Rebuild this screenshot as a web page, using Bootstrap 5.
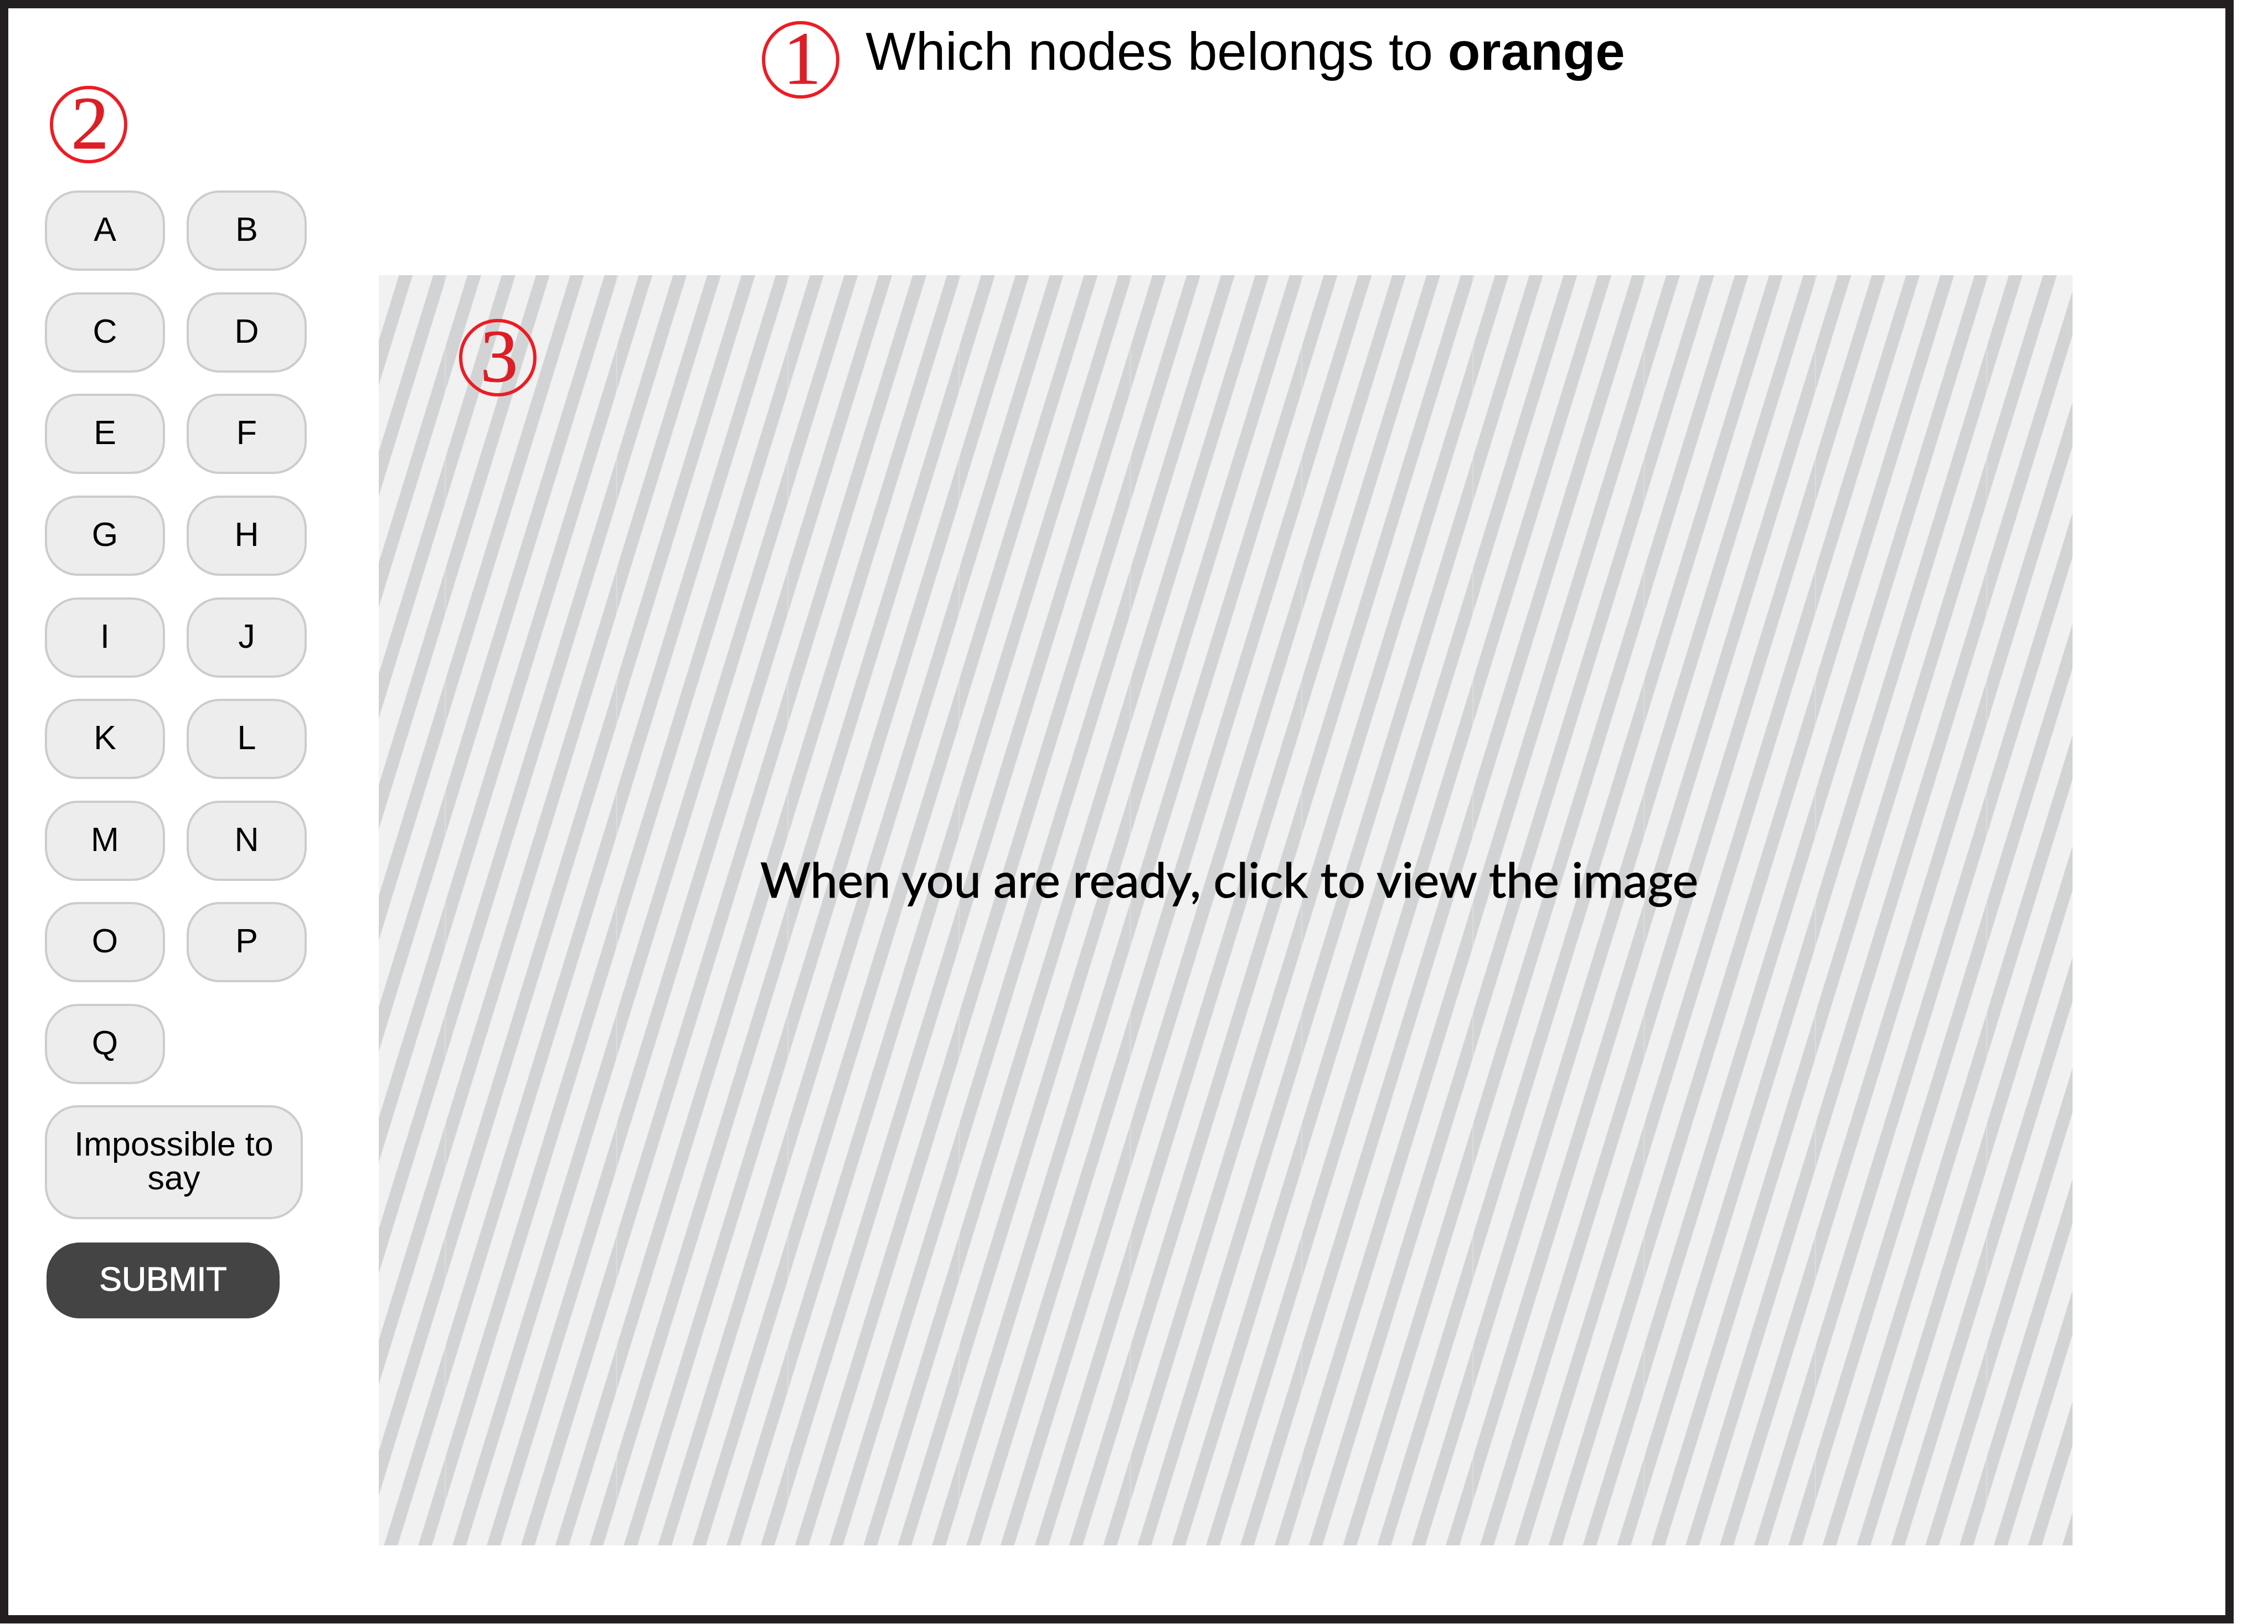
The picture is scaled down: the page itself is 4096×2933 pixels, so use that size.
<!DOCTYPE html>
<html lang="en">
<head>
<meta charset="utf-8">
<meta name="viewport" content="width=device-width, initial-scale=1">
<title>Which nodes belongs to orange</title>
<link href="https://cdn.jsdelivr.net/npm/bootstrap@5.3.0/dist/css/bootstrap.min.css" rel="stylesheet">
<style>
  body { background: #fff; color: #000; font-family: "Liberation Sans", Arial, sans-serif; }
  .study-frame { border: 15px solid #231f20; margin-right: 62px; padding: 0 276px 126px 66px; }

  /* Answer column */
  .answer-side { width: 603px; padding-top: 140px; }
  .answer-grid { display: grid; grid-template-columns: 217px 217px; column-gap: 39px; align-content: space-between; min-height: 1614px; margin-top: 49px; }
  .answer-btn { --bs-btn-color: #000; --bs-btn-bg: #ededed; --bs-btn-border-color: #ccc; --bs-btn-border-width: 4px;
    --bs-btn-border-radius: 60px; --bs-btn-font-size: 61px; --bs-btn-line-height: 61px; --bs-btn-font-family: inherit;
    --bs-btn-hover-bg: #ddd; --bs-btn-hover-color: #000; --bs-btn-hover-border-color: #bbb;
    padding: 36px 24px 40px; }
  .answer-wide { width: 466px; margin-top: 38px; }
  .submit-btn { --bs-btn-color: #fff; --bs-btn-bg: #444; --bs-btn-border-width: 0;
    --bs-btn-hover-bg: #333; --bs-btn-hover-color: #fff; width: 421px; margin: 42px 0 0 3px; -webkit-text-stroke: 1px; }

  /* Question and picture */
  .question-row { gap: 47px; padding: 23px 116px 0 0; margin-bottom: 319px; }
  .question-text { font-size: 96px; line-height: 110px; }
  .view-panel { aspect-ratio: 4 / 3; background: #f1f1f1; }
  .view-label { font-family: Lato, sans-serif; font-size: 88px; line-height: 108px; padding: 0 0 114px 13px; -webkit-text-stroke: 1px; }

  /* Red numbered callouts */
  .step-mark { width: 140px; height: 140px; border: 6px solid #ed1c24; border-radius: 50%; color: #dc1e26;
    font-family: "Liberation Serif", serif; font-size: 136px; line-height: 128px; padding: 0 0 6px 5px; -webkit-text-stroke: 1px; }
  .step-side { margin-left: 9px; }
  .step-panel { left: 145px; top: 79px; }
</style>
</head>
<body>
<main class="study-frame d-flex align-items-start">
  <aside class="answer-side flex-shrink-0">
    <span class="step-mark step-side d-flex align-items-center justify-content-center">2</span>
    <div class="answer-grid" role="group" aria-label="Nodes">
      <button type="button" class="btn answer-btn">A</button>
      <button type="button" class="btn answer-btn">B</button>
      <button type="button" class="btn answer-btn">C</button>
      <button type="button" class="btn answer-btn">D</button>
      <button type="button" class="btn answer-btn">E</button>
      <button type="button" class="btn answer-btn">F</button>
      <button type="button" class="btn answer-btn">G</button>
      <button type="button" class="btn answer-btn">H</button>
      <button type="button" class="btn answer-btn">I</button>
      <button type="button" class="btn answer-btn">J</button>
      <button type="button" class="btn answer-btn">K</button>
      <button type="button" class="btn answer-btn">L</button>
      <button type="button" class="btn answer-btn">M</button>
      <button type="button" class="btn answer-btn">N</button>
      <button type="button" class="btn answer-btn">O</button>
      <button type="button" class="btn answer-btn">P</button>
      <button type="button" class="btn answer-btn">Q</button>
    </div>
    <button type="button" class="btn answer-btn answer-wide d-block">Impossible to say</button>
    <button type="submit" class="btn answer-btn submit-btn d-block">SUBMIT</button>
  </aside>

  <section class="flex-grow-1">
    <header class="question-row d-flex justify-content-center align-items-start">
      <span class="step-mark d-flex align-items-center justify-content-center flex-shrink-0">1</span>
      <h1 class="question-text fw-normal m-0">Which nodes belongs to <strong class="fw-bold">orange</strong></h1>
    </header>
    <button type="button" class="view-panel position-relative d-flex align-items-center justify-content-center w-100 border-0 p-0 text-black">
      <svg class="position-absolute top-0 start-0 w-100 h-100" viewBox="0 0 3333 2500" preserveAspectRatio="none" aria-hidden="true">
        <defs>
          <pattern id="stripes" width="67.4" height="2500" patternUnits="userSpaceOnUse" patternTransform="matrix(1 0 -0.3084 1 39.8 0)">
            <rect width="26.9" height="2500" fill="#d1d3d4"/>
          </pattern>
          <pattern id="seams" x="130" width="337" height="2500" patternUnits="userSpaceOnUse">
            <rect width="2" height="2500" fill="#f1f1f1" fill-opacity=".4"/>
          </pattern>
        </defs>
        <rect width="3333" height="2500" fill="url(#stripes)"/>
        <rect width="3333" height="2500" fill="url(#seams)"/>
      </svg>
      <span class="step-mark step-panel position-absolute d-flex align-items-center justify-content-center">3</span>
      <span class="view-label position-relative">When you are ready, click to view the image</span>
    </button>
  </section>
</main>
<script src="https://cdn.jsdelivr.net/npm/bootstrap@5.3.0/dist/js/bootstrap.bundle.min.js"></script>
</body>
</html>
